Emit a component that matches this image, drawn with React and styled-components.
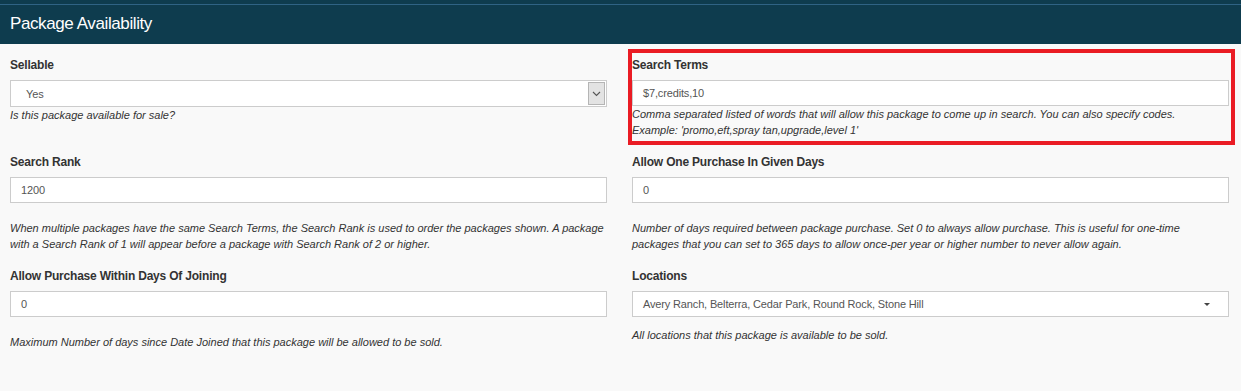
import React from "react";
import styled, { createGlobalStyle } from "styled-components";

const Global = createGlobalStyle`
  html, body { margin: 0; padding: 0; background: #f9f9f9; }
  body { font-family: "Liberation Sans", Arial, sans-serif; color: #333; }
`;

const Page = styled.div`
  width: 1241px;
  height: 391px;
  overflow: hidden;
  background: #f9f9f9;
`;

const Header = styled.div`
  height: 44px;
  box-sizing: border-box;
  padding: 4px 0 0 10px;
  display: flex;
  align-items: center;
  background: linear-gradient(to bottom, #0e3c4e 0 4px, #2f6384 4px 5px, #0e3c4e 5px);
  color: #fff;
  font-size: 17px;
  letter-spacing: -0.4px;
`;

const Grid = styled.div`
  display: grid;
  grid-template-columns: 597px 597px;
  column-gap: 25px;
  row-gap: 9px;
  padding: 9px 12px 0 10px;
  align-items: start;
`;

const Field = styled.div`
  padding: 4px 0 3px;
  ${(p) =>
    p.$highlight &&
    `
    outline: 4px solid #ea1c24;
    margin-right: -2px;
    padding-right: 2px;
  `}
`;

const Label = styled.label`
  display: block;
  font-size: 12px;
  font-weight: bold;
  line-height: 17px;
  letter-spacing: -0.2px;
  color: #333;
  margin-bottom: 6px;
`;

const Input = styled.div`
  height: 26px;
  box-sizing: border-box;
  border: 1px solid #ccc;
  background: #fff;
  padding: 0 10px;
  display: flex;
  align-items: center;
  font-size: 11px;
  letter-spacing: -0.15px;
  color: #555;
`;

const NativeSelect = styled(Input)`
  height: 27px;
  padding: 0 1px 0 15px;
  justify-content: space-between;
`;

const ArrowBox = styled.span`
  width: 17px;
  height: 23px;
  box-sizing: border-box;
  border: 1px solid #b5b5b5;
  background: #e3e3e3;
  display: flex;
  align-items: center;
  justify-content: center;
`;

const FancySelect = styled(Input)`
  justify-content: space-between;
  padding-right: 18px;
`;

const Caret = styled.span`
  width: 0;
  height: 0;
  border-left: 3.5px solid transparent;
  border-right: 3.5px solid transparent;
  border-top: 3.5px solid #444;
`;

const Help = styled.p`
  margin: ${(p) => p.$gap || 0}px -10px 0 0;
  font-size: 11px;
  line-height: 16px;
  font-style: italic;
  color: #333;
`;

export default function App() {
  return (
    <Page>
      <Global />
      <Header>Package Availability</Header>
      <Grid>
        <Field>
          <Label>Sellable</Label>
          <NativeSelect>
            <span>Yes</span>
            <ArrowBox>
              <svg width="9" height="6" viewBox="0 0 9 6">
                <path d="M1 1 L4.5 4.5 L8 1" fill="none" stroke="#555" strokeWidth="1.1" />
              </svg>
            </ArrowBox>
          </NativeSelect>
          <Help>Is this package available for sale?</Help>
        </Field>
        <Field $highlight>
          <Label>Search Terms</Label>
          <Input>$7,credits,10</Input>
          <Help>
            Comma separated listed of words that will allow this package to come up in search. You can also specify codes.
            <br />
            Example: 'promo,eft,spray tan,upgrade,level 1'
          </Help>
        </Field>
        <Field>
          <Label>Search Rank</Label>
          <Input>1200</Input>
          <Help $gap={17}>
            When multiple packages have the same Search Terms, the Search Rank is used to order the packages shown. A package
            <br />
            with a Search Rank of 1 will appear before a package with Search Rank of 2 or higher.
          </Help>
        </Field>
        <Field>
          <Label>Allow One Purchase In Given Days</Label>
          <Input>0</Input>
          <Help $gap={17}>
            Number of days required between package purchase. Set 0 to always allow purchase. This is useful for one-time
            <br />
            packages that you can set to 365 days to allow once-per year or higher number to never allow again.
          </Help>
        </Field>
        <Field>
          <Label>Allow Purchase Within Days Of Joining</Label>
          <Input>0</Input>
          <Help $gap={17}>Maximum Number of days since Date Joined that this package will be allowed to be sold.</Help>
        </Field>
        <Field>
          <Label>Locations</Label>
          <FancySelect>
            <span>Avery Ranch, Belterra, Cedar Park, Round Rock, Stone Hill</span>
            <Caret />
          </FancySelect>
          <Help $gap={10}>All locations that this package is available to be sold.</Help>
        </Field>
      </Grid>
    </Page>
  );
}
